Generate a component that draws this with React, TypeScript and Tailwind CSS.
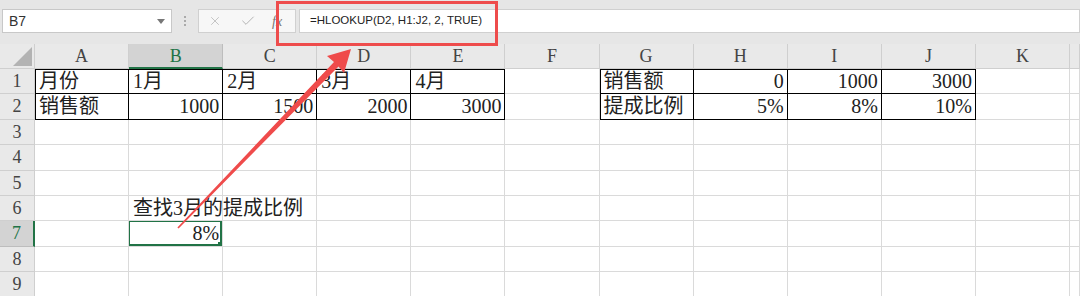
import { Check, X } from 'lucide-react'

const cols = ['A', 'B', 'C', 'D', 'E', 'F', 'G', 'H', 'I', 'J', 'K', '']

type Cell = { text: string; right?: boolean; boxed?: boolean; top?: boolean; left?: boolean; overflow?: boolean }

const cells: Record<string, Cell> = {
  A1: { text: '月份', boxed: true, top: true, left: true },
  B1: { text: '1月', boxed: true, top: true },
  C1: { text: '2月', boxed: true, top: true },
  D1: { text: '3月', boxed: true, top: true },
  E1: { text: '4月', boxed: true, top: true },
  G1: { text: '销售额', boxed: true, top: true, left: true },
  H1: { text: '0', right: true, boxed: true, top: true },
  I1: { text: '1000', right: true, boxed: true, top: true },
  J1: { text: '3000', right: true, boxed: true, top: true },
  A2: { text: '销售额', boxed: true, left: true },
  B2: { text: '1000', right: true, boxed: true },
  C2: { text: '1500', right: true, boxed: true },
  D2: { text: '2000', right: true, boxed: true },
  E2: { text: '3000', right: true, boxed: true },
  G2: { text: '提成比例', boxed: true, left: true },
  H2: { text: '5%', right: true, boxed: true },
  I2: { text: '8%', right: true, boxed: true },
  J2: { text: '10%', right: true, boxed: true },
  B6: { text: '查找3月的提成比例', overflow: true },
  B7: { text: '8%', right: true },
}

const font = { fontFamily: '"Liberation Serif", "Noto Sans CJK SC", serif' }

function GridCell({ id }: { id: string }) {
  const c = cells[id]
  const selected = id === 'B7'
  let cls = 'relative h-[25.4px] border-r border-b border-[#dadada] text-[20px] leading-[25px] text-[#222] whitespace-nowrap'
  if (c?.boxed) cls += ' border-black'
  if (c?.top && c?.left) cls += ' shadow-[inset_1px_1px_0_#000]'
  else if (c?.top) cls += ' shadow-[inset_0_1px_0_#000]'
  else if (c?.left) cls += ' shadow-[inset_1px_0_0_#000]'
  if (c?.overflow) cls += ' overflow-visible z-10'
  else cls += ' overflow-hidden'
  return (
    <div className={cls} style={font}>
      {c && (
        <div className={c.right ? 'pr-[3px] text-right' : 'pl-[4px] text-left'}>{c.text}</div>
      )}
      {selected && (
        <div className="absolute -top-[1px] -left-[1px] right-0 bottom-0 border-2 border-[#217346]">
          <div className="absolute -right-[3px] -bottom-[3px] w-[5px] h-[5px] bg-[#217346]" />
        </div>
      )}
    </div>
  )
}

export default function App() {
  const rows = [1, 2, 3, 4, 5, 6, 7, 8, 9]
  return (
    <div className="relative w-[1080px] h-[296px] overflow-hidden bg-white">
      {/* formula bar */}
      <div className="h-[44px] bg-[#e6e6e6] flex items-start pt-[9px] pl-[2px]" style={{ fontFamily: '"Liberation Sans", "Noto Sans CJK SC", sans-serif' }}>
        <div className="w-[170px] h-[24px] bg-white border border-[#c8c8c8] flex items-center justify-between pl-[6px] pr-[6px] text-[14px] text-[#333]">
          <span>B7</span>
          <span className="w-0 h-0 border-l-[4px] border-r-[4px] border-t-[5px] border-l-transparent border-r-transparent border-t-[#777]" />
        </div>
        <div className="w-[26px] h-[24px] flex flex-col items-center justify-center gap-[2px]">
          <span className="w-[2px] h-[2px] bg-[#aaa]" />
          <span className="w-[2px] h-[2px] bg-[#aaa]" />
          <span className="w-[2px] h-[2px] bg-[#aaa]" />
        </div>
        <div className="w-[98px] h-[24px] bg-[#f7f7f7] border border-[#d0d0d0] flex items-center pl-[9px] gap-[18px]">
          <X size={14} strokeWidth={1.3} className="text-[#b4b4b4]" />
          <Check size={16} strokeWidth={1.5} className="text-[#b4b4b4]" />
          <span className="italic text-[14px] text-[#777] -ml-[2px]" style={{ fontFamily: '"Liberation Serif", serif' }}>fx</span>
        </div>
        <div className="ml-[3px] flex-1 h-[24px] bg-white border border-[#d0d0d0] flex items-center pl-[10px] text-[11.5px] text-[#222]">
          =HLOOKUP(D2, H1:J2, 2, TRUE)
        </div>
      </div>

      {/* sheet */}
      <div className="grid grid-cols-[35px_repeat(11,94.1px)_1fr]">
        <div className="h-[25px] bg-[#e9e9e9] border-r border-b border-[#cfcfcf] flex items-end justify-end pr-[2px] pb-[2px]">
          <div className="w-[19px] h-[19px] shrink-0 bg-[#b3b3b3] [clip-path:polygon(100%_0,100%_100%,0_100%)]" />
        </div>
        {cols.map((c) =>
          c === 'B' ? (
            <div key={c} className="h-[25px] bg-[#d3d3d3] border-r border-[#bdbdbd] border-b-2 border-b-[#217346] text-center text-[18px] leading-[24px] text-[#217346]" style={font}>
              {c}
            </div>
          ) : (
            <div key={c} className="h-[25px] bg-[#e9e9e9] border-r border-b border-[#cfcfcf] text-center text-[18px] leading-[24px] text-[#444]" style={font}>
              {c}
            </div>
          ),
        )}
        {rows.map((r) => [
          r === 7 ? (
            <div key={'h' + r} className="h-[25.4px] bg-[#d3d3d3] border-b border-[#bdbdbd] border-r-2 border-r-[#217346] text-center text-[18px] leading-[25px] text-[#217346]" style={font}>
              {r}
            </div>
          ) : (
            <div key={'h' + r} className="h-[25.4px] bg-[#e9e9e9] border-r border-b border-[#cfcfcf] text-center text-[18px] leading-[25px] text-[#444]" style={font}>
              {r}
            </div>
          ),
          ...cols.map((c) => <GridCell key={c + r} id={c + r} />),
        ])}
      </div>

      {/* annotation overlay */}
      <svg className="absolute inset-0 pointer-events-none z-20" width="1080" height="296">
        <rect x="277.5" y="2.5" width="219" height="42" fill="none" stroke="#ee4c4c" strokeWidth="3" />
        <polygon
          points="351,49 344,73 338.5,66.5 178.6,228.4 177.4,227.6 334,62 327,56"
          fill="#ef4b4b"
        />
      </svg>
    </div>
  )
}
